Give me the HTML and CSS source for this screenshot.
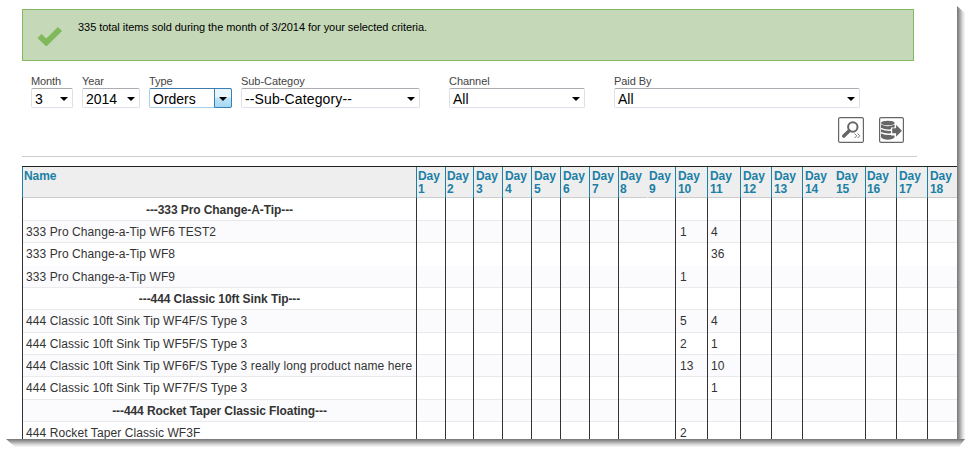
FILE: index.html
```html
<!DOCTYPE html>
<html lang="en">
<head>
<meta charset="utf-8">
<title>Items sold</title>
<link rel="stylesheet" href="styles.css">
</head>
<body>
<main class="sheet">
  <div class="notice">
    <svg class="check" width="26" height="20" viewBox="0 0 26 20"><path d="M2.500 10 9.300 16.500 23 3" fill="none" stroke="#7fb95c" stroke-width="5.800"/></svg>
    <p>335 total items sold during the month of 3/2014 for your selected criteria.</p>
  </div>
  <form class="filters">
    <div class="field month"><label>Month</label><div class="select"><span>3</span><i></i></div></div>
    <div class="field year"><label>Year</label><div class="select"><span>2014</span><i></i></div></div>
    <div class="field type"><label>Type</label><div class="select active"><span>Orders</span><b><i></i></b></div></div>
    <div class="field sub"><label>Sub-Categoy</label><div class="select"><span>--Sub-Category--</span><i></i></div></div>
    <div class="field channel"><label>Channel</label><div class="select"><span>All</span><i></i></div></div>
    <div class="field paid"><label>Paid By</label><div class="select"><span>All</span><i></i></div></div>
  </form>
  <div class="actions">
    <svg width="26" height="26" viewBox="0 0 26 26"><rect x=".6" y=".6" width="24.800" height="24.800" rx="1.500" fill="#fff" stroke="#666" stroke-width="1.200"/><circle cx="14.800" cy="10" r="4.700" fill="none" stroke="#666" stroke-width="2"/><path d="M11 14 5.800 19" stroke="#666" stroke-width="3.600" stroke-linecap="round"/><path d="m16.500 16.500 2.300 2.300-2.300 2.300M19.500 16.500l2.300 2.300-2.300 2.300" fill="none" stroke="#777" stroke-width="1"/></svg>
    <svg width="25" height="26" viewBox="0 0 25 26"><rect x=".6" y=".6" width="23.800" height="24.800" rx="1.500" fill="#fff" stroke="#666" stroke-width="1.200"/><g fill="#666"><ellipse cx="8.800" cy="6" rx="6.800" ry="2.300"/><path d="M2 7.600q6.800 3.200 13.600 0v2.900H12v1.700q-6 .7-10-1.400zM2 12.200q4 1.900 10 1.700v2.400q-6 .5-10-1.300zM2 16.400q4 1.900 10 1.600v.4h3.600v1.900q-1.600 2.400-6.800 2.400T2 20.300z"/><path d="M13.200 11.200h3.900V7.700l5.800 6-5.800 6v-3.500h-3.900z"/></g></svg>
  </div>
  <hr>
  <table>
    <colgroup><col class="w394"><col class="w29"><col class="w28"><col class="w29"><col class="w29"><col class="w29"><col class="w29"><col class="w29"><col class="w29"><col class="w28"><col class="w32"><col class="w33"><col class="w31"><col class="w31"><col class="w32"><col class="w31"><col class="w31"><col class="w31"><col class="w30"></colgroup>
    <thead><tr><th>Name</th><th>Day 1</th><th>Day 2</th><th class="in">Day 3</th><th class="in">Day 4</th><th class="in">Day 5</th><th class="in">Day 6</th><th class="in">Day 7</th><th>Day 8</th><th>Day 9</th><th class="in">Day 10</th><th class="in">Day 11</th><th class="in">Day 12</th><th class="in">Day 13</th><th class="in">Day 14</th><th>Day 15</th><th>Day 16</th><th class="in">Day 17</th><th class="in">Day 18</th></tr></thead>
    <tbody>
      <tr class="group tall"><td>---333 Pro Change-A-Tip---</td><td></td><td></td><td></td><td></td><td></td><td></td><td></td><td></td><td></td><td></td><td></td><td></td><td></td><td></td><td></td><td></td><td></td><td></td></tr>
      <tr><td>333 Pro Change-a-Tip WF6 TEST2</td><td></td><td></td><td></td><td></td><td></td><td></td><td></td><td></td><td></td><td>1</td><td>4</td><td></td><td></td><td></td><td></td><td></td><td></td><td></td></tr>
      <tr class="tall plain"><td>333 Pro Change-a-Tip WF8</td><td></td><td></td><td></td><td></td><td></td><td></td><td></td><td></td><td></td><td></td><td>36</td><td></td><td></td><td></td><td></td><td></td><td></td><td></td></tr>
      <tr><td>333 Pro Change-a-Tip WF9</td><td></td><td></td><td></td><td></td><td></td><td></td><td></td><td></td><td></td><td>1</td><td></td><td></td><td></td><td></td><td></td><td></td><td></td><td></td></tr>
      <tr class="group"><td>---444 Classic 10ft Sink Tip---</td><td></td><td></td><td></td><td></td><td></td><td></td><td></td><td></td><td></td><td></td><td></td><td></td><td></td><td></td><td></td><td></td><td></td><td></td></tr>
      <tr class="tall"><td>444 Classic 10ft Sink Tip WF4F/S Type 3</td><td></td><td></td><td></td><td></td><td></td><td></td><td></td><td></td><td></td><td>5</td><td>4</td><td></td><td></td><td></td><td></td><td></td><td></td><td></td></tr>
      <tr><td>444 Classic 10ft Sink Tip WF5F/S Type 3</td><td></td><td></td><td></td><td></td><td></td><td></td><td></td><td></td><td></td><td>2</td><td>1</td><td></td><td></td><td></td><td></td><td></td><td></td><td></td></tr>
      <tr><td>444 Classic 10ft Sink Tip WF6F/S Type 3 really long product name here</td><td></td><td></td><td></td><td></td><td></td><td></td><td></td><td></td><td></td><td>13</td><td>10</td><td></td><td></td><td></td><td></td><td></td><td></td><td></td></tr>
      <tr class="tall"><td>444 Classic 10ft Sink Tip WF7F/S Type 3</td><td></td><td></td><td></td><td></td><td></td><td></td><td></td><td></td><td></td><td></td><td>1</td><td></td><td></td><td></td><td></td><td></td><td></td><td></td></tr>
      <tr class="group"><td>---444 Rocket Taper Classic Floating---</td><td></td><td></td><td></td><td></td><td></td><td></td><td></td><td></td><td></td><td></td><td></td><td></td><td></td><td></td><td></td><td></td><td></td><td></td></tr>
      <tr><td>444 Rocket Taper Classic WF3F</td><td></td><td></td><td></td><td></td><td></td><td></td><td></td><td></td><td></td><td>2</td><td></td><td></td><td></td><td></td><td></td><td></td><td></td><td></td></tr>
    </tbody>
  </table>
</main>
<div class="shade-right"></div>
<div class="shade-bottom"></div>
</body>
</html>
```
FILE: styles.css
```css
* { box-sizing: border-box; }
body {
  margin: 0;
  display: grid;
  grid-template: 439px 15px / 957px 15px;
  width: 972px;
  height: 454px;
  overflow: hidden;
  background: #fff;
  font-family: "Liberation Sans", Arial, sans-serif;
  color: #333;
}
.sheet { overflow: hidden; padding: 9px 0 0 22px; height: 439px; }
.shade-right {
  width: 8px;
  margin-top: 6px;
  background: linear-gradient(90deg, #747474, #a4a4a4 35%, #dadada 70%, #fafafa);
  clip-path: polygon(0 0, 100% 7px, 100% 100%, 0 100%);
}
.shade-bottom {
  grid-column: 1 / 3;
  width: 959px;
  height: 8px;
  margin-left: 6px;
  background: linear-gradient(180deg, #747474, #a4a4a4 35%, #dadada 70%, #fafafa);
  clip-path: polygon(0 0, 100% 0, calc(100% - 6px) 100%, 9px 100%);
}
.notice {
  display: flex;
  width: 892px;
  height: 52px;
  border: 1px solid #82b85f;
  background: #c5d8b8;
  font-size: 11px;
  line-height: 13px;
  color: #000;
}
.check { margin: 16px 0 0 14px; }
.notice p { margin: 11px 0 0 15px; letter-spacing: -0.05px; }
.filters { display: flex; margin: 14px 0 0 9px; height: 33px; }
.field { margin-right: 10px; }
.field label { display: block; height: 13px; font-size: 11px; line-height: 13px; letter-spacing: -0.1px; color: #444; white-space: nowrap; }
.field.sub label, .field.channel label, .field.paid label { letter-spacing: -0.05px; }
.select {
  display: flex;
  align-items: center;
  justify-content: space-between;
  height: 20px;
  padding: 2px 4px 0 3px;
  border: 1px solid #dfe1ea;
  border-top-color: #abadb3;
  border-radius: 2px;
  font-size: 14px;
  line-height: 18px;
  color: #000;
  white-space: nowrap;
}
.select i { width: 8px; height: 4px; background: #000; clip-path: polygon(0 0, 100% 0, 50% 100%); }
.select.active { border-color: #a9cfe8; border-top-color: #3d7bad; }
.select b {
  display: flex;
  align-items: center;
  justify-content: center;
  width: 18px;
  height: 20px;
  margin: -3px -5px -1px 0;
  padding-top: 2px;
  border: 1px solid #3c7fb1;
  border-radius: 0 2px 2px 0;
  background: linear-gradient(#e8f5fc 45%, #c0e4f8 50%, #a4d8f4);
}
.month { width: 42px; margin-right: 9px; }
.year { width: 58px; margin-right: 9px; }
.type { width: 83px; margin-right: 9px; }
.sub { width: 179px; margin-right: 29px; }
.sub .select { letter-spacing: .12px; }
.channel { width: 136px; margin-right: 29px; }
.paid { width: 246px; margin: 0; }
.actions { display: flex; gap: 15px; margin: 9px 0 0 816px; height: 26px; }
hr { width: 895px; height: 1px; margin: 13px 0 9px; border: 0; background: #ccc; }
table { width: 935px; table-layout: fixed; border-collapse: separate; border-spacing: 0; border-top: 1px solid #222; }
.w394 { width: 394px; }
.w28 { width: 28px; }
.w29 { width: 29px; }
.w30 { width: 30px; }
.w31 { width: 31px; }
.w32 { width: 32px; }
.w33 { width: 33px; }
th {
  height: 31px;
  padding: 3px 0 2px 1px;
  border-left: 1px solid #1c7fa6;
  box-shadow: inset 0 -1px #ccc;
  background: #eee;
  color: #1c7fa6;
  font-size: 12px;
  line-height: 13px;
  letter-spacing: -0.1px;
  text-align: left;
  vertical-align: top;
}
th.in { padding-left: 2px; }
td {
  height: 22px;
  padding: 0 0 1px 4px;
  border-left: 1px solid #333;
  box-shadow: inset 0 -1px #eaeaec;
  font-size: 12px;
  line-height: 20px;
  white-space: nowrap;
}
td:first-child { padding-left: 3px; letter-spacing: .09px; }
td:nth-child(12) { padding-left: 3px; }
th:nth-child(10), th:nth-child(16) { border-left-color: #eee; }
td:nth-child(10), td:nth-child(16) { border-left: 0; }
.tall td { height: 23px; }
tbody tr:nth-child(even) td { background: #fbfbfd; }
.plain td { box-shadow: none; }
.group td:first-child { font-weight: bold; text-align: center; padding: 0 0 1px; letter-spacing: -0.08px; }
.group.tall td:first-child { padding: 1px 0 0; }
```
